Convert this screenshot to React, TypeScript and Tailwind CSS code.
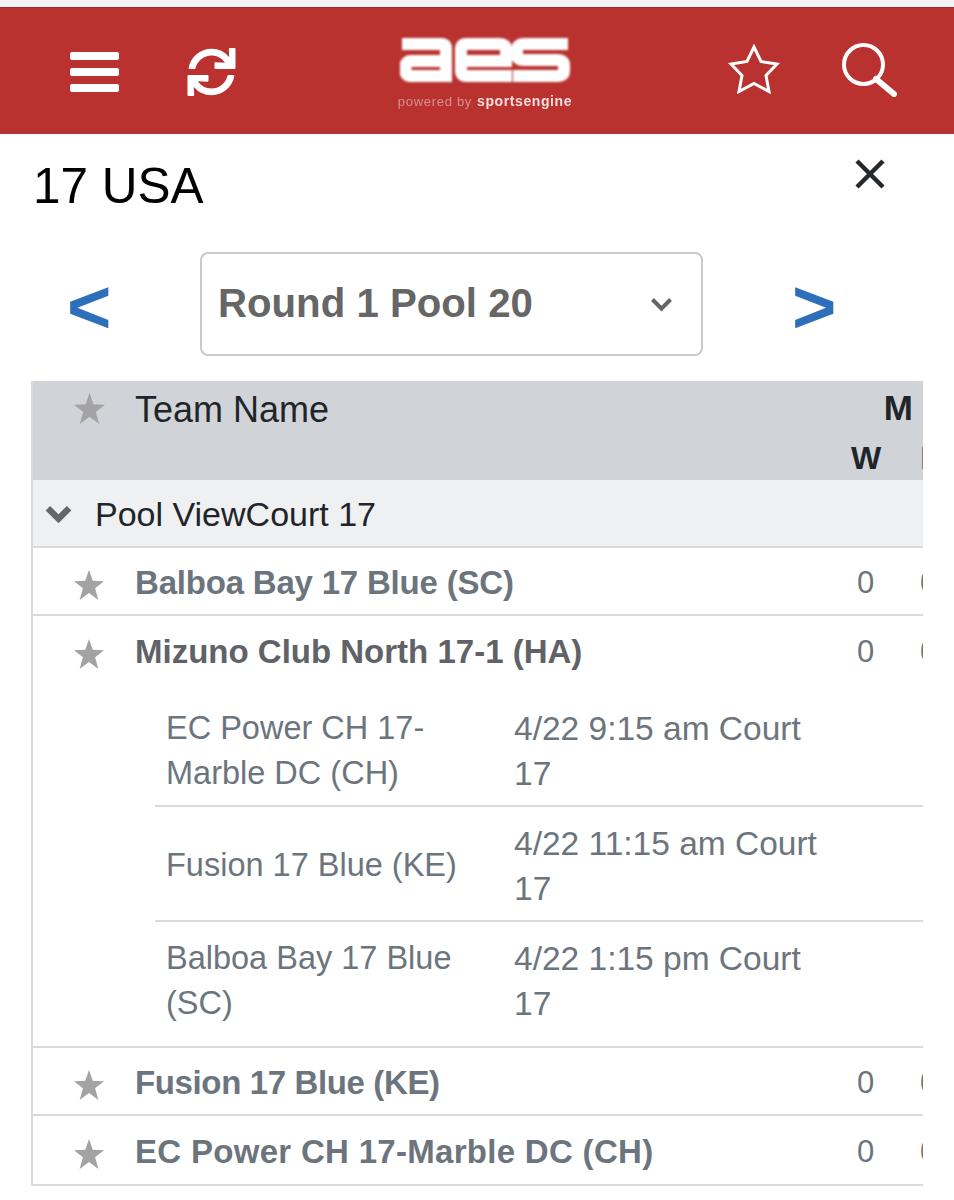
import { FaSync } from 'react-icons/fa';

function GrayStar({ className }: { className: string }) {
  return (
    <svg viewBox="0 0 32 32" className={className}>
      <polygon points="16,0 20,11.500 32,12 22.500,19.500 26,32 16,24.500 6,32 9.500,19.500 0,12 12,11.500" fill="#a3a3a3" />
    </svg>
  );
}

function Chevron({ className, width }: { className: string; width: number }) {
  return (
    <svg viewBox="0 0 28 18" className={className}>
      <path d="M3 3L14 14L25 3" fill="none" stroke="#666666" strokeWidth={width} />
    </svg>
  );
}

function Logo() {
  return (
    <div className="flex flex-col items-center w-[180px]">
      <svg viewBox="0 0 170 44" className="w-[170px] h-[44px] blur-[0.8px]">
        <g fill="none" stroke="#ffffff" strokeWidth="12">
          <path d="M2 6H42Q46 6 46 10V38H11Q5.500 38 5.500 33V29Q5.500 23 11 23H46" />
          <path d="M112 23H62Q61 23 61 22V11Q61 6 66 6H100Q106 6 106 11V20M112 38H66Q61 38 61 33V20" />
          <path d="M168 6H124Q117 6 117 12V17Q117 22 124 22H158Q164 22 164 27V33Q164 38 158 38H113" />
        </g>
      </svg>
      <div className="mt-[12px] flex items-baseline gap-[5px] leading-[14px] whitespace-nowrap blur-[0.5px]">
        <span className="text-[13px] text-[#d98f8d] tracking-[0.7px]">powered by</span>
        <span className="text-[14px] text-[#f4dddc] font-bold tracking-[0.6px]">sportsengine</span>
      </div>
    </div>
  );
}

function TopBar() {
  return (
    <div className="h-[134px] bg-[#f1f3f4] pt-[7px]">
      <div className="h-[127px] bg-[#b93230] border-t border-[#a82a28] flex items-center pl-[70px] pr-[57px]">
        <div className="w-[49px] mt-[2px] flex flex-col gap-[8px]">
          <div className="h-[8px] rounded-[2px] bg-white" />
          <div className="h-[8px] rounded-[2px] bg-white" />
          <div className="h-[8px] rounded-[2px] bg-white" />
        </div>
        <FaSync className="ml-[68px] mt-[2px] text-white w-[49px] h-[48px]" />
        <div className="ml-[159px] mt-[5px]">
          <Logo />
        </div>
        <div className="ml-auto mb-[2px] flex items-center gap-[62px]">
          <svg viewBox="0 0 52 50" className="w-[52px] h-[50px] mb-[2px]">
            <polygon
              points="26,3 33,17.500 49,20 38,31.500 41,47.500 26,39.500 11,47.500 14,31.500 3,20 19,17.500"
              fill="none"
              stroke="#ffffff"
              strokeWidth="3"
            />
          </svg>
          <svg viewBox="0 0 55 54" className="w-[55px] h-[54px]">
            <circle cx="21.500" cy="21.500" r="19.500" fill="none" stroke="#ffffff" strokeWidth="4" />
            <path d="M34 36L52 51" stroke="#ffffff" strokeWidth="6" strokeLinecap="round" />
          </svg>
        </div>
      </div>
    </div>
  );
}

function TeamRow({ name, open, last, tracking }: { name: string; open?: boolean; last?: boolean; tracking?: string }) {
  return (
    <div
      className={`flex items-center h-[68px] pt-[4px] ${open || last ? '' : 'border-b-2 border-[#d9dadb]'} ${
        open ? 'text-[#5f6367]' : 'text-[#6c757d]'
      }`}
    >
      <GrayStar className="ml-[40px] w-[32px] h-[30px] mt-[4px]" />
      <div className={`ml-[30px] text-[33px] font-bold whitespace-nowrap ${tracking ?? ''}`}>{name}</div>
      <div className="ml-auto flex text-[31px] text-[#6c757d]">
        <span className="w-[63px]">0</span>
        <span className="w-[3px] overflow-hidden">0</span>
      </div>
    </div>
  );
}

const matches = [
  { team: ['EC Power CH 17-', 'Marble DC (CH)'], time: ['4/22 9:15 am Court', '17'] },
  { team: ['Fusion 17 Blue (KE)'], time: ['4/22 11:15 am Court', '17'] },
  { team: ['Balboa Bay 17 Blue', '(SC)'], time: ['4/22 1:15 pm Court', '17'] },
];

export default function App() {
  return (
    <div className="w-[954px] h-[1200px] bg-white overflow-hidden font-['Liberation_Sans',Arial,sans-serif]">
      <TopBar />

      <div className="flex justify-between pl-[33px] pr-[69px] pt-[23px]">
        <h1 className="text-[49.500px] leading-[58px] text-black">17 USA</h1>
        <svg viewBox="0 0 30 30" className="w-[30px] h-[30px] mt-[2px]">
          <path d="M2 2L28 28M28 2L2 28" stroke="#24292e" strokeWidth="4.500" />
        </svg>
      </div>

      <div className="flex items-center h-[104px] pl-[67px] mt-[37px]">
        <span className="w-[133px] pt-[6px] text-[76px] leading-[104px] font-bold text-[#2d6fbb]">&lt;</span>
        <div className="w-[503px] h-[104px] rounded-[8px] border-2 border-[#c8cbce] flex items-center pl-[16px] pr-[28px] text-[#666666]">
          <span className="text-[40.200px] font-bold">Round 1 Pool 20</span>
          <Chevron className="ml-auto w-[23px] h-[15px]" width={5} />
        </div>
        <span className="ml-[89px] pt-[6px] text-[76px] leading-[104px] font-bold text-[#2d6fbb]">&gt;</span>
      </div>

      <div className="ml-[31px] mt-[25px] w-[892px] overflow-hidden border-l-2 border-[#d9dadb] border-b-2">
        <div className="h-[99px] bg-[#d0d4d8] -ml-[2px] pl-[42px] text-[#212529]">
          <div className="flex items-center h-[58px]">
            <GrayStar className="w-[33px] h-[31px] mb-[4px]" />
            <span className="ml-[29px] text-[36px]">Team Name</span>
            <span className="ml-auto pr-[10px] mb-[4px] text-[35px] font-bold">M</span>
          </div>
          <div className="flex justify-end text-[32px] font-bold leading-[38px]">
            <span className="w-[69px]">W</span>
            <span className="w-[3px] overflow-hidden text-[#6c757d]">L</span>
          </div>
        </div>

        <div className="h-[68px] bg-[#eff0f2] border-b-2 border-[#d9dadb] flex items-center">
          <Chevron className="ml-[12px] w-[27px] h-[18px] mt-[2px]" width={6.5} />
          <span className="ml-[23px] mt-[2px] text-[34px] text-[#212529]">Pool ViewCourt 17</span>
        </div>

        <TeamRow name="Balboa Bay 17 Blue (SC)" tracking="tracking-[-0.2px]" />

        <div className="border-b-2 border-[#d9dadb]">
          <TeamRow name="Mizuno Club North 17-1 (HA)" open />
          <div className="pl-[122px] pt-[8px] leading-[45px] text-[#6c757d]">
            {matches.map((m, i) => (
              <div
                key={i}
                className={`flex items-center pl-[11px] ${i < 2 ? 'border-b-2 border-[#d9dadb] h-[115px] pt-[4px]' : 'h-[124px] pb-[7px]'}`}
              >
                <div className="w-[348px] text-[32.500px]">
                  {m.team.map((line) => (
                    <div key={line}>{line}</div>
                  ))}
                </div>
                <div className="text-[33.500px]">
                  {m.time.map((line) => (
                    <div key={line}>{line}</div>
                  ))}
                </div>
              </div>
            ))}
          </div>
        </div>

        <TeamRow name="Fusion 17 Blue (KE)" tracking="tracking-[-0.37px]" />
        <TeamRow name="EC Power CH 17-Marble DC (CH)" last tracking="tracking-[0.3px]" />
      </div>
    </div>
  );
}
